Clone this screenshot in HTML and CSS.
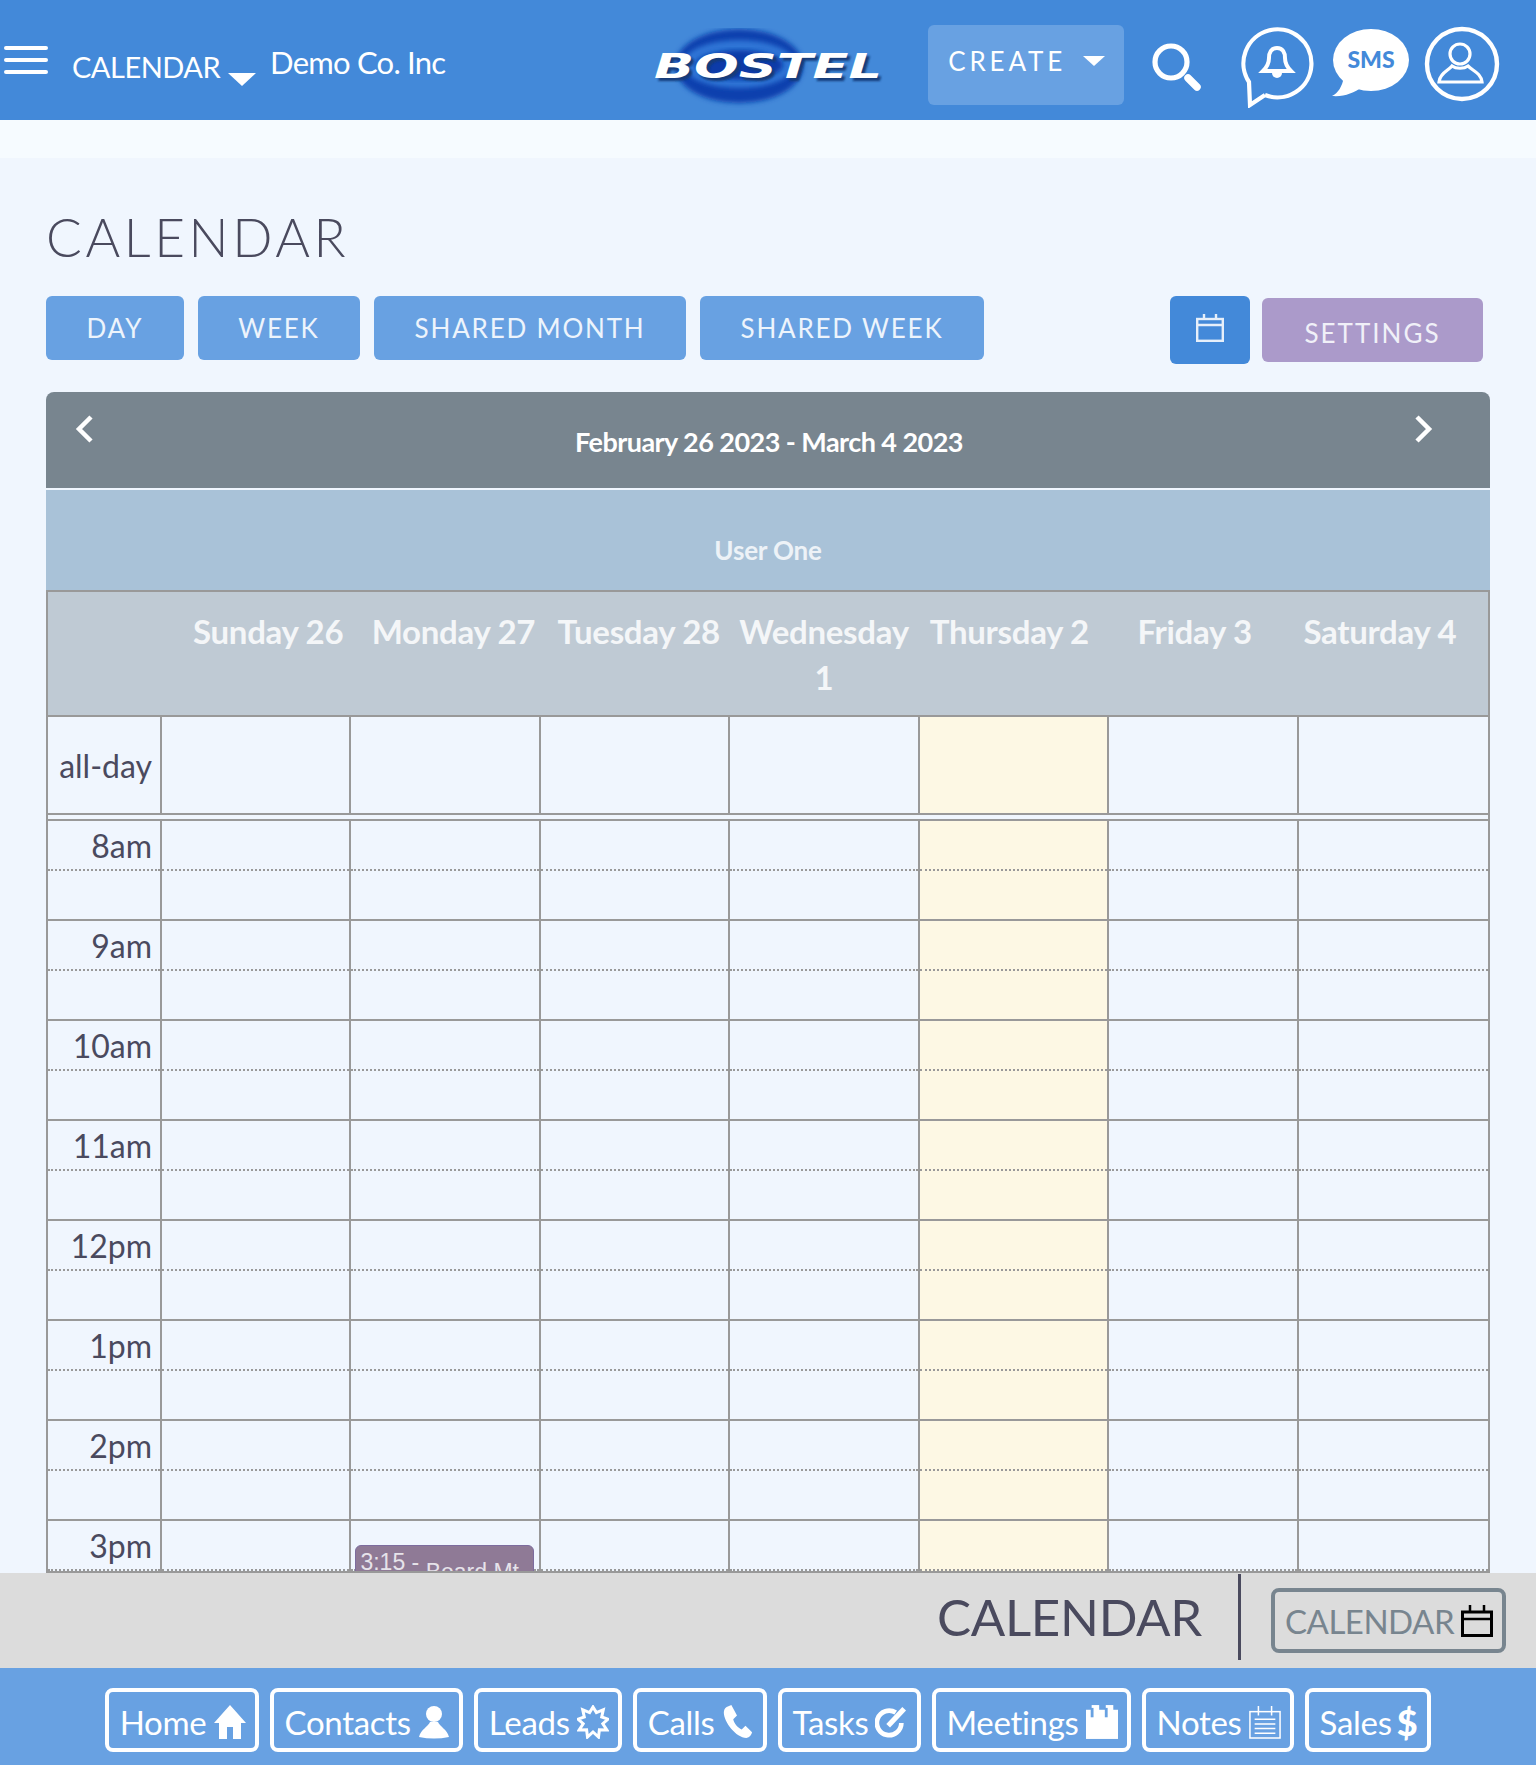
FILE: index.html
```html
<!DOCTYPE html>
<html lang="en">
<head>
    <meta charset="UTF-8">
    <title>Calendar</title>
    <link rel="stylesheet" href="styles.css">
</head>
<body>
<div class="app">
    <!-- Top bar -->
    <header class="topbar">
        <div class="hamburger"><span></span><span></span><span></span></div>
        <div class="module-name">CALENDAR</div>
        <div class="module-caret"></div>
        <div class="company">Demo Co. Inc</div>
        <svg class="logo" viewBox="0 0 240 80">
            <defs>
                <filter id="soft"><feGaussianBlur stdDeviation="2.5"/></filter>
                <filter id="softer"><feGaussianBlur stdDeviation="1"/></filter>
            </defs>
            <ellipse cx="87" cy="38" rx="64" ry="37" fill="#0e3fae" filter="url(#soft)"/>
            <ellipse cx="87" cy="36" rx="56" ry="24" fill="#2f74d6" filter="url(#soft)"/>
            <ellipse cx="87" cy="37" rx="44" ry="15" fill="#0c3aa8" filter="url(#soft)"/>
            <text class="logo-shadow" x="5" y="53" textLength="228" lengthAdjust="spacingAndGlyphs" filter="url(#softer)">BOSTEL</text>
            <text class="logo-text" x="2" y="50" textLength="228" lengthAdjust="spacingAndGlyphs">BOSTEL</text>
        </svg>
        <div class="create-btn">CREATE <span class="create-caret"></span></div>
        <svg class="icon-search" viewBox="0 0 52 50" fill="none" stroke="#fff">
            <circle cx="20" cy="19" r="16" stroke-width="5.2"/>
            <line x1="37" y1="35" x2="46" y2="44" stroke-width="7.5" stroke-linecap="round"/>
        </svg>
        <svg class="icon-bell" viewBox="0 0 80 85" fill="none" stroke="#fff">
            <path d="M25 72 L10 82 L9 59 A34 34 0 1 1 25 72" stroke-width="4.2"/>
            <path d="M37 25 c-6 0 -8 5 -8 10 c0 6 -2 9 -6 13 h28 c-4 -4 -6 -7 -6 -13 c0 -5 -2 -10 -8 -10z" stroke-width="4"/>
            <path d="M32 50 h10 a5 5 0 0 1 -10 0z" fill="#fff" stroke="none"/>
        </svg>
        <svg class="icon-sms" viewBox="0 0 82 75">
            <ellipse cx="41" cy="35" rx="38" ry="31" fill="#fff"/>
            <path d="M14 52 C12 62 8 68 2 71 C14 72 24 68 32 62z" fill="#fff"/>
            <text class="sms-text" x="41" y="43" text-anchor="middle">SMS</text>
        </svg>
        <svg class="icon-user" viewBox="0 0 76 78" fill="none" stroke="#fff">
            <circle cx="38" cy="39" r="35" stroke-width="4.4"/>
            <circle cx="36" cy="29" r="10" stroke-width="3.2"/>
            <path d="M15 57 C16 48 24 46 28 41 C32 44 40 44 44 41 C49 46 57 48 58 57z" stroke-width="3.2"/>
        </svg>
    </header>
    <div class="strip"></div>

    <main class="page">
        <h1 class="page-title">CALENDAR</h1>

        <div class="toolbar">
            <a class="btn">DAY</a>
            <a class="btn">WEEK</a>
            <a class="btn">SHARED MONTH</a>
            <a class="btn">SHARED WEEK</a>
            <a class="btn-date">
                <svg class="icon-cal" viewBox="0 0 28 28" fill="none" stroke="#e6effa" stroke-width="2.4">
                    <rect x="1.2" y="5" width="25.6" height="21.8"/>
                    <path d="M1 11 H27 M8 0 V5 M20 0 V5"/>
                </svg>
            </a>
            <a class="btn-settings">SETTINGS</a>
        </div>

        <section class="calendar">
            <div class="cal-nav">
                <svg class="chev chev-left" viewBox="0 0 20 28" fill="none" stroke="#fff" stroke-width="4.5"><polyline points="17,2 5,14 17,26"/></svg>
                <div class="cal-range">February 26 2023 - March 4 2023</div>
                <svg class="chev chev-right" viewBox="0 0 20 28" fill="none" stroke="#fff" stroke-width="4.5"><polyline points="3,2 15,14 3,26"/></svg>
            </div>
            <div class="cal-user">User One</div>

            <div class="cal-grid">
                <div class="day-head">
                    <div></div>
                    <div>Sunday 26</div>
                    <div>Monday 27</div>
                    <div>Tuesday 28</div>
                    <div>Wednesday 1</div>
                    <div>Thursday 2</div>
                    <div>Friday 3</div>
                    <div>Saturday 4</div>
                </div>

                <div class="row row-allday">
                    <div class="cell label">all-day</div><div class="cell"></div><div class="cell"></div><div class="cell"></div><div class="cell"></div><div class="cell today"></div><div class="cell"></div><div class="cell"></div>
                </div>

                <div class="hours">
                    <div class="row"><div class="cell slot label">8am</div><div class="cell slot"></div><div class="cell slot"></div><div class="cell slot"></div><div class="cell slot"></div><div class="cell slot today"></div><div class="cell slot"></div><div class="cell slot"></div></div>
                    <div class="row"><div class="cell slot label">9am</div><div class="cell slot"></div><div class="cell slot"></div><div class="cell slot"></div><div class="cell slot"></div><div class="cell slot today"></div><div class="cell slot"></div><div class="cell slot"></div></div>
                    <div class="row"><div class="cell slot label">10am</div><div class="cell slot"></div><div class="cell slot"></div><div class="cell slot"></div><div class="cell slot"></div><div class="cell slot today"></div><div class="cell slot"></div><div class="cell slot"></div></div>
                    <div class="row"><div class="cell slot label">11am</div><div class="cell slot"></div><div class="cell slot"></div><div class="cell slot"></div><div class="cell slot"></div><div class="cell slot today"></div><div class="cell slot"></div><div class="cell slot"></div></div>
                    <div class="row"><div class="cell slot label">12pm</div><div class="cell slot"></div><div class="cell slot"></div><div class="cell slot"></div><div class="cell slot"></div><div class="cell slot today"></div><div class="cell slot"></div><div class="cell slot"></div></div>
                    <div class="row"><div class="cell slot label">1pm</div><div class="cell slot"></div><div class="cell slot"></div><div class="cell slot"></div><div class="cell slot"></div><div class="cell slot today"></div><div class="cell slot"></div><div class="cell slot"></div></div>
                    <div class="row"><div class="cell slot label">2pm</div><div class="cell slot"></div><div class="cell slot"></div><div class="cell slot"></div><div class="cell slot"></div><div class="cell slot today"></div><div class="cell slot"></div><div class="cell slot"></div></div>
                    <div class="row"><div class="cell slot label">3pm</div><div class="cell slot"></div><div class="cell slot"><div class="event"><span>3:15 -</span> <span class="event-title">Board Mt</span></div></div><div class="cell slot"></div><div class="cell slot"></div><div class="cell slot today"></div><div class="cell slot"></div><div class="cell slot"></div></div>
                </div>
            </div>
        </section>
    </main>

    <!-- Current module bar -->
    <div class="module-bar">
        <div class="module-title">CALENDAR</div>
        <div class="module-divider"></div>
        <a class="module-btn">CALENDAR
            <svg class="icon-cal-black" viewBox="0 0 32 32" fill="none" stroke="#000" stroke-width="3">
                <rect x="1.5" y="7" width="29" height="23.5"/>
                <path d="M1.5 14 H30.5 M9 0 V7 M23 0 V7" stroke-width="2.5"/>
            </svg>
        </a>
    </div>

    <!-- Bottom navigation -->
    <nav class="bottom-nav">
        <a class="nav-btn">Home
            <svg class="nav-icon" viewBox="0 0 32 34" fill="#fff"><path d="M16 0 L32 18 H27 V34 H19 V22 H13 V34 H5 V18 H0z"/></svg>
        </a>
        <a class="nav-btn">Contacts
            <svg class="nav-icon" viewBox="0 0 30 34" fill="#fff"><circle cx="15" cy="9" r="8"/><path d="M0 32 C2 24 9 22 11 17 h8 c2 5 9 7 11 15 C20 34 10 34 0 32z"/></svg>
        </a>
        <a class="nav-btn">Leads
            <svg class="nav-icon" viewBox="0 0 32 34" fill="none" stroke="#fff" stroke-width="3"><polygon points="16,2 19.4,7.6 26.3,4.7 24.7,12 31,14.2 25.8,18.7 29.9,25 22.4,24.7 21.5,32 16,27 10.5,32 9.6,24.7 2.1,25 6.2,18.7 1,14.2 7.3,12 5.7,4.7 12.6,7.6"/></svg>
        </a>
        <a class="nav-btn">Calls
            <svg class="nav-icon" viewBox="0 0 34 36" fill="#fff"><path d="M6 2 L11 0 L17 11 L13 15 C14 20 18 24 22 26 L26 22 L33 29 Q32 34 27 35 C16 35 3 18 3 8 Q3 4 6 2z"/></svg>
        </a>
        <a class="nav-btn">Tasks
            <svg class="nav-icon" viewBox="0 0 34 34" fill="none" stroke="#fff"><path d="M22 7 A13 13 0 1 0 28 18" stroke-width="5"/><line x1="14" y1="21" x2="31" y2="3" stroke-width="5.5"/></svg>
        </a>
        <a class="nav-btn">Meetings
            <svg class="nav-icon" viewBox="0 0 34 36">
                <rect x="0" y="5" width="34" height="31" fill="#fff"/>
                <rect x="6" y="0" width="8" height="12" fill="#fff"/>
                <rect x="21" y="0" width="8" height="12" fill="#fff"/>
                <rect x="5" y="3" width="3" height="10" fill="#68a1e2"/>
                <rect x="20" y="3" width="3" height="10" fill="#68a1e2"/>
            </svg>
        </a>
        <a class="nav-btn">Notes
            <svg class="nav-icon" viewBox="0 0 34 36" fill="none" stroke="#fff" stroke-width="1.6"><rect x="1" y="7" width="32" height="28"/><path d="M10 1 V11 M24 1 V11 M6 15 H28 M6 20 H28 M6 25 H28 M6 30 H28"/></svg>
        </a>
        <a class="nav-btn">Sales <span class="dollar">$</span></a>
    </nav>
</div>
</body>
</html>
```

FILE: styles.css
```css
* {
    margin: 0;
    padding: 0;
    box-sizing: border-box;
}

body {
    font-family: Lato, "Noto Sans", sans-serif;
    background: #f0f6fe;
    color: #4a4a5e;
    overflow: hidden;
}

.app {
    display: flex;
    flex-direction: column;
    height: 100vh;
}

/* Top bar */
.topbar {
    display: flex;
    align-items: center;
    height: 120px;
    flex: none;
    background: #4389d9;
    color: #fff;
    padding-left: 4px;
}

.hamburger {
    display: flex;
    flex-direction: column;
    gap: 8px;
    width: 44px;
    margin-top: -1px;
}

.hamburger span {
    height: 4px;
    background: #fff;
    border-radius: 2px;
}

.module-name {
    font-size: 29px;
    margin-left: 24px;
    margin-top: 13px;
    letter-spacing: -0.5px;
}

.module-caret {
    width: 0;
    height: 0;
    border-left: 14px solid transparent;
    border-right: 14px solid transparent;
    border-top: 13px solid #fff;
    margin-left: 8px;
    margin-top: 39px;
}

.company {
    font-size: 31px;
    margin-left: 14px;
    margin-top: 3px;
    letter-spacing: -0.77px;
}

.logo {
    width: 240px;
    height: 80px;
    margin-left: 207px;
    margin-top: 16px;
}

.logo-text,
.logo-shadow {
    font-family: "DejaVu Sans", sans-serif;
    font-weight: 700;
    font-style: italic;
    font-size: 33px;
}

.logo-text {
    fill: #fff;
}

.logo-shadow {
    fill: #123a78;
}

.create-btn {
    display: flex;
    align-items: center;
    width: 196px;
    height: 80px;
    margin-left: 36px;
    margin-top: 10px;
    padding: 0 19px 8px 20px;
    background: #68a1e2;
    border-radius: 6px;
    font-size: 26px;
    letter-spacing: 3.8px;
}

.create-caret {
    width: 0;
    height: 0;
    margin-left: auto;
    border-left: 11px solid transparent;
    border-right: 11px solid transparent;
    border-top: 10px solid #fff;
}

.icon-search {
    width: 52px;
    height: 50px;
    margin-left: 27px;
    margin-top: 16px;
}

.icon-bell {
    width: 80px;
    height: 85px;
    margin-left: 37px;
    margin-top: 10px;
}

.icon-sms {
    width: 82px;
    height: 75px;
    margin-left: 10px;
    margin-top: 5px;
}

.sms-text {
    font-family: Lato, sans-serif;
    font-weight: 900;
    font-size: 23px;
    fill: #4389d9;
}

.icon-user {
    width: 76px;
    height: 78px;
    margin-left: 12px;
    margin-top: 8px;
}

.strip {
    height: 38px;
    flex: none;
    background: #f6fbff;
}

/* Page */
.page {
    display: flex;
    flex-direction: column;
    flex: 1;
    min-height: 0;
    padding: 0 46px;
}

.page-title {
    font-size: 53px;
    font-weight: 300;
    letter-spacing: 3.6px;
    line-height: 64px;
    margin-top: 47px;
}

.toolbar {
    display: flex;
    align-items: center;
    gap: 14px;
    margin-top: 27px;
    padding-right: 7px;
    height: 68px;
}

.btn {
    display: flex;
    align-items: center;
    justify-content: center;
    height: 64px;
    margin-bottom: 4px;
    padding: 0 40.5px;
    background: #68a1e2;
    color: #edf4fc;
    border-radius: 6px;
    font-size: 26px;
    letter-spacing: 1.8px;
}

.btn-date {
    display: flex;
    align-items: center;
    justify-content: center;
    width: 80px;
    height: 68px;
    margin-left: auto;
    margin-right: -2px;
    background: #4389d9;
    border-radius: 6px;
}

.icon-cal {
    width: 28px;
    height: 28px;
    margin-bottom: 4px;
}

.btn-settings {
    display: flex;
    align-items: center;
    justify-content: center;
    width: 221px;
    height: 64px;
    padding-top: 6px;
    background: #ab9aca;
    color: #f0f0f8;
    border-radius: 6px;
    font-size: 26px;
    letter-spacing: 2px;
}

/* Calendar */
.calendar {
    display: flex;
    flex-direction: column;
    flex: 1;
    min-height: 0;
    margin-top: 28px;
}

.cal-nav {
    display: grid;
    grid-template-columns: 1fr auto 1fr;
    align-items: start;
    height: 96px;
    flex: none;
    padding: 23px 56px 0 28px;
    background: #78858f;
    border-radius: 8px 8px 0 0;
    color: #fff;
}

.chev {
    width: 20px;
    height: 28px;
}

.chev-right {
    justify-self: end;
}

.cal-range {
    font-size: 27px;
    font-weight: 700;
    letter-spacing: -0.55px;
    line-height: 34px;
    margin-top: 10px;
    transform: translateX(15px);
}

.cal-user {
    height: 100px;
    flex: none;
    margin-top: 2px;
    padding-top: 43px;
    background: #a9c2d8;
    color: #edf2f7;
    font-size: 26px;
    font-weight: 700;
    letter-spacing: -0.2px;
    line-height: 34px;
    text-align: center;
}

.cal-grid {
    display: flex;
    flex-direction: column;
    flex: 1;
    min-height: 0;
    overflow: hidden;
    border: 2px solid #999;
}

.day-head {
    display: grid;
    grid-template-columns: 127.5px repeat(7, 185.3px);
    height: 125px;
    flex: none;
    padding-top: 16px;
    background: #bfcad4;
    border-bottom: 2px solid #999;
    color: #f4f6f8;
    font-size: 33px;
    font-weight: 700;
    letter-spacing: -0.3px;
    line-height: 46px;
    text-align: center;
}

.row {
    display: grid;
    grid-template-columns: 114px repeat(7, 1fr);
    height: 100px;
    border-bottom: 2px solid #999;
}

.row-allday {
    height: 98px;
    flex: none;
}

.hours {
    margin-top: 4px;
    border-top: 2px solid #999;
}

.cell {
    position: relative;
    border-right: 2px solid #999;
}

.cell:last-child {
    border-right: none;
}

.slot::before {
    content: "";
    position: absolute;
    left: 0;
    right: 0;
    top: 0;
    height: 48px;
    border-bottom: 2px dotted #999;
}

.today {
    background: #fdf8e4;
}

.label {
    padding-right: 8px;
    font-size: 32px;
    line-height: 50px;
    text-align: right;
}

.row-allday .label {
    padding-top: 2px;
    line-height: 94px;
}

.event {
    position: absolute;
    left: 4px;
    right: 5px;
    top: 24px;
    height: 60px;
    padding: 4px 0 0 4px;
    overflow: hidden;
    background: #8f7a96;
    border: 1px solid #7d6c9e;
    border-radius: 6px;
    color: #e6e3ea;
    font-family: "Liberation Sans", sans-serif;
    font-size: 23px;
    line-height: 24px;
    white-space: nowrap;
}

.event-title {
    vertical-align: -10px;
}

/* Current module bar */
.module-bar {
    display: flex;
    align-items: center;
    justify-content: flex-end;
    height: 95px;
    flex: none;
    padding-right: 30px;
    background: #dcdcdc;
}

.module-title {
    font-size: 51px;
    line-height: 60px;
    letter-spacing: -0.3px;
    margin-top: -8px;
}

.module-divider {
    width: 3px;
    height: 86px;
    margin: -8px 30px 0 36px;
    background: #4a4a5e;
}

.module-btn {
    display: flex;
    align-items: center;
    gap: 7px;
    width: 235px;
    height: 65px;
    padding: 2px 0 0 10px;
    border: 4px solid #78858f;
    border-radius: 8px;
    color: #78858f;
    font-size: 33px;
    letter-spacing: -0.5px;
    margin-top: -1px;
}

.icon-cal-black {
    width: 32px;
    height: 32px;
}

/* Bottom navigation */
.bottom-nav {
    display: flex;
    justify-content: center;
    align-items: flex-start;
    gap: 11px;
    height: 97px;
    flex: none;
    padding-top: 20px;
    background: #68a1e2;
}

.nav-btn {
    display: flex;
    align-items: center;
    gap: 7px;
    height: 64px;
    padding: 4px 9.5px 0 10.5px;
    border: 4px solid #fff;
    border-radius: 8px;
    color: #fff;
    font-size: 33px;
    letter-spacing: -0.3px;
}

.nav-icon {
    width: 32px;
    height: 34px;
}

.dollar {
    margin-left: -2px;
    font-size: 36px;
    font-weight: 900;
}
```
